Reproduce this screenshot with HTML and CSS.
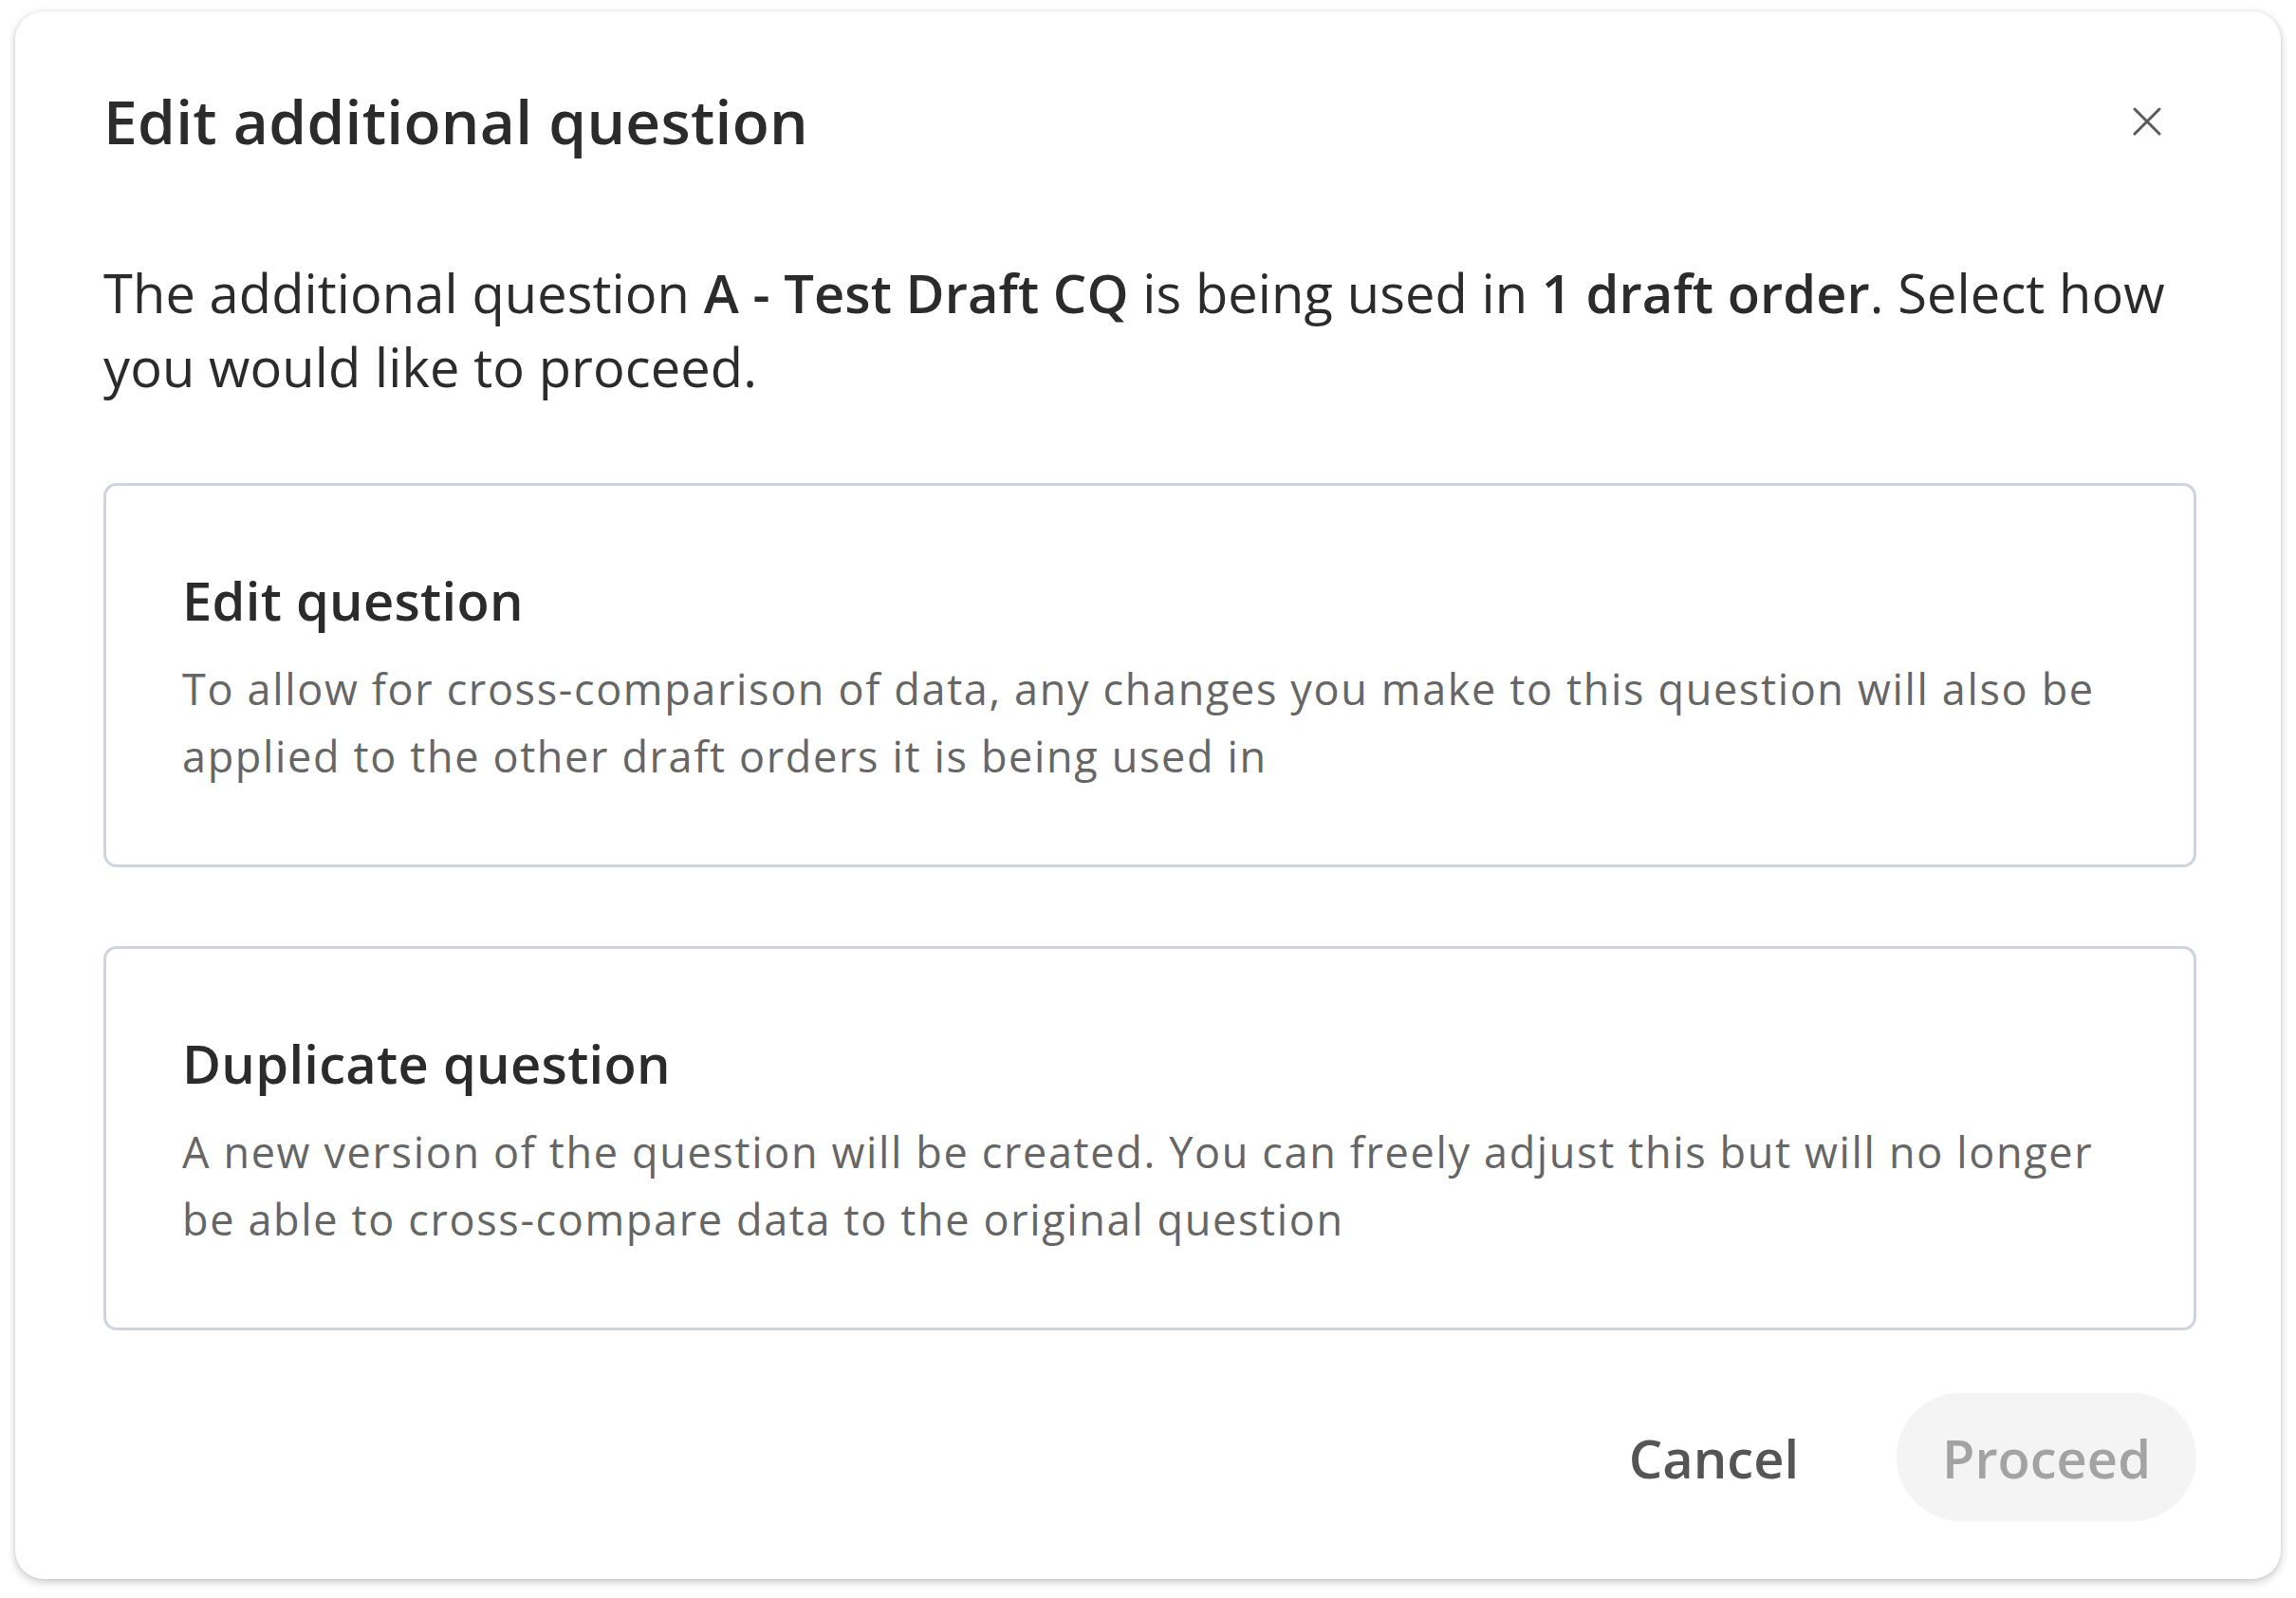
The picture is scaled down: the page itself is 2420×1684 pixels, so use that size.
FILE: index.html
```html
<!DOCTYPE html>
<html lang="en">
<head>
<meta charset="utf-8">
<title>Edit additional question</title>
<link rel="stylesheet" href="styles.css">
</head>
<body>
<div class="dialog">
  <div class="dialog-header">
    <h1 class="dialog-title">Edit additional question</h1>
    <button class="close-btn" aria-label="Close">
      <svg width="30" height="30" viewBox="0 0 30 30"><path d="M2 2 L28 28 M28 2 L2 28" stroke="#5a5a5a" stroke-width="3" stroke-linecap="round" fill="none"/></svg>
    </button>
  </div>
  <p class="intro">The additional question <strong>A - Test Draft CQ</strong> is being used in <strong>1 draft order</strong>. Select how you would like to proceed.</p>
  <div class="option">
    <h2 class="option-title">Edit question</h2>
    <p class="option-desc">To allow for cross-comparison of data, any changes you make to this question will also be applied to the other draft orders it is being used in</p>
  </div>
  <div class="option option-second">
    <h2 class="option-title">Duplicate question</h2>
    <p class="option-desc">A new version of the question will be created. You can freely adjust this but will no longer be able to cross-compare data to the original question</p>
  </div>
  <div class="actions">
    <button class="btn btn-cancel">Cancel</button>
    <button class="btn btn-proceed" disabled>Proceed</button>
  </div>
</div>
</body>
</html>
```
FILE: styles.css
```css
html, body {
  margin: 0;
  background: #ffffff;
}
body {
  padding: 12px 16px 20px;
  font-family: "Open Sans", "Noto Sans", sans-serif;
  color: #2b2b2b;
}
.dialog {
  background: #fff;
  border-radius: 30px;
  box-shadow: 0 3px 10px rgba(0,0,0,0.22), 0 0 3px rgba(0,0,0,0.08);
  padding: 72px 89px 61px 93px;
}
.dialog-header {
  display: flex;
  align-items: center;
  justify-content: space-between;
  height: 88px;
}
.dialog-title {
  margin: 0;
  font-size: 64px;
  line-height: 88px;
  font-weight: 600;
  letter-spacing: 0.3px;
  color: #2b2b2b;
}
.close-btn {
  border: 0;
  background: none;
  padding: 0;
  width: 30px;
  height: 30px;
  margin-right: 37px;
  display: flex;
}
.intro {
  margin: 97px 0 84px;
  font-size: 56px;
  line-height: 78px;
  letter-spacing: 0.1px;
  color: #2b2b2b;
}
.intro strong {
  font-weight: 600;
}
.option {
  border: 3px solid #cfd3dd;
  border-radius: 14px;
  padding: 82px 80px 79px 80px;
}
.option-second {
  margin-top: 83px;
}
.option-title {
  margin: 0 0 20px;
  font-size: 56px;
  line-height: 76px;
  font-weight: 600;
  letter-spacing: 0.3px;
  color: #2b2b2b;
}
.option-desc {
  margin: 0;
  font-size: 45px;
  line-height: 71px;
  letter-spacing: 1.65px;
  color: #666666;
}
.actions {
  display: flex;
  justify-content: flex-end;
  align-items: center;
  gap: 53px;
  margin-top: 66px;
}
.btn {
  font-family: "Open Sans", "Noto Sans", sans-serif;
  font-size: 56px;
  font-weight: 600;
  border: 0;
  height: 135px;
  padding: 0 48px;
  border-radius: 68px;
  background: none;
}
.btn-cancel {
  color: #555555;
  padding: 0 50px;
}
.btn-proceed {
  background: #f4f4f4;
  color: #a3a3a3;
}
```
